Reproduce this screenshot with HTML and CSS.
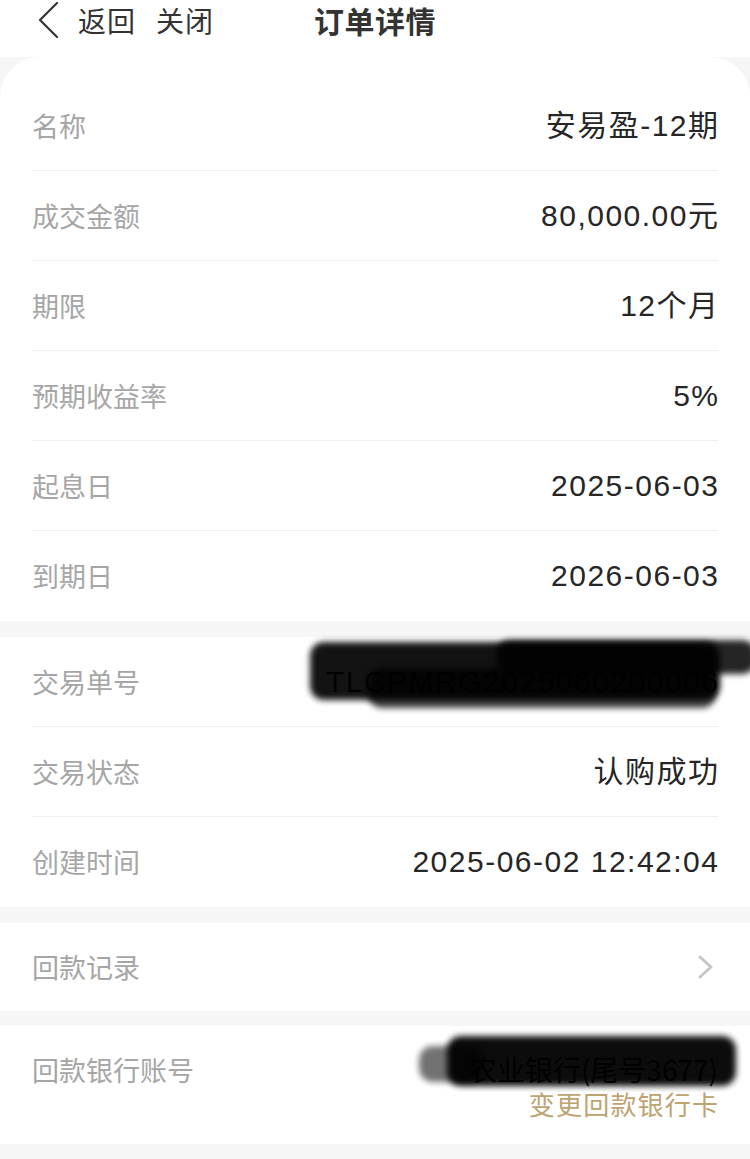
FILE: index.html
```html
<!DOCTYPE html>
<html lang="zh-CN">
<head>
<meta charset="utf-8">
<title>订单详情</title>
<link rel="stylesheet" href="styles.css">
</head>
<body>
<header class="nav">
  <div class="nav-left">
    <svg class="back" width="22" height="36" viewBox="0 0 22 36"><path d="M20 1 L3 18 L20 35" fill="none" stroke="#333" stroke-width="2.2" stroke-linecap="round" stroke-linejoin="round"/></svg>
    <span class="nav-link">返回</span>
    <span class="nav-link">关闭</span>
  </div>
  <h1 class="nav-title">订单详情</h1>
  <div></div>
</header>

<main>
  <section class="card first">
    <div class="row"><span class="label">名称</span><span class="value">安易盈-12期</span></div>
    <div class="row"><span class="label">成交金额</span><span class="value">80,000.00元</span></div>
    <div class="row"><span class="label">期限</span><span class="value">12个月</span></div>
    <div class="row"><span class="label">预期收益率</span><span class="value">5%</span></div>
    <div class="row"><span class="label">起息日</span><span class="value">2025-06-03</span></div>
    <div class="row last"><span class="label">到期日</span><span class="value">2026-06-03</span></div>
  </section>

  <section class="card">
    <div class="row"><span class="label">交易单号</span>
      <span class="value masked">TLCPMRG2025060200006
        <span class="blot b1"></span><span class="blot b2"></span><span class="blot b3"></span>
      </span>
    </div>
    <div class="row"><span class="label">交易状态</span><span class="value">认购成功</span></div>
    <div class="row last"><span class="label">创建时间</span><span class="value">2025-06-02 12:42:04</span></div>
  </section>

  <section class="card">
    <div class="row last short"><span class="label">回款记录</span>
      <svg class="chev" width="16" height="24" viewBox="0 0 16 24"><path d="M2 2 L13 12 L2 22" fill="none" stroke="#c6c6c6" stroke-width="3" stroke-linecap="round" stroke-linejoin="round"/></svg>
    </div>
  </section>

  <section class="card bank">
    <span class="label">回款银行账号</span>
    <div class="bank-right">
      <span class="value masked">农业银行(尾号3677)
        <span class="blot c1"></span><span class="blot c2"></span>
      </span>
      <span class="link">变更回款银行卡</span>
    </div>
  </section>
</main>
</body>
</html>
```
FILE: styles.css
```css
* { box-sizing: border-box; }
html, body { margin: 0; padding: 0; }
body {
  width: 750px;
  min-height: 1159px;
  background: #f6f6f6;
  font-family: "Liberation Sans", "Noto Sans CJK SC", sans-serif;
  overflow: hidden;
}
.nav {
  height: 57px;
  background: #fff;
  display: grid;
  grid-template-columns: 1fr auto 1fr;
  align-items: start;
  padding-top: 1px;
}
.nav-left {
  display: flex;
  align-items: center;
  height: 38px;
  padding-left: 37px;
}
.back { display: block; margin-right: 19px; }
.nav-link {
  font-size: 28px;
  line-height: 36px;
  color: #333;
  margin-right: 20px;
  letter-spacing: 1px;
  font-family: "Noto Sans CJK SC", sans-serif;
}
.nav-title {
  margin: 0;
  font-size: 30px;
  line-height: 38px;
  font-weight: 600;
  color: #333;
  letter-spacing: 0.5px;
  font-family: "Noto Sans CJK SC", sans-serif;
}
.card {
  background: #fff;
  padding: 0 32px;
  margin-top: 16px;
}
.card.first {
  margin-top: 0;
  border-radius: 40px 40px 0 0;
  padding-top: 24px;
}
.row {
  height: 90px;
  display: flex;
  justify-content: space-between;
  align-items: center;
  border-bottom: 1px solid #efefef;
}
.row.last { border-bottom: none; }
.row.short { height: 88px; }
.label {
  font-size: 27px;
  line-height: 36px;
  color: #a6a6a6;
  font-family: "Noto Sans CJK SC", sans-serif;
}
.value {
  font-size: 30px;
  line-height: 36px;
  color: #262626;
  white-space: nowrap;
  letter-spacing: 1.5px;
  margin-right: -1.5px;
}
.chev { display: block; margin-right: 4px; }
.masked { position: relative; color: #111; }
.blot {
  position: absolute;
  background: #000;
  border-radius: 14px;
  filter: blur(3px);
}
.b1 { left: -16px; top: -22px; right: 0; height: 58px; opacity: 0.92; }
.b2 { left: 42px; top: 4px; right: 4px; height: 40px; opacity: 0.75; }
.b3 { left: 170px; top: -24px; right: -36px; height: 34px; opacity: 0.85; }
.card.bank {
  margin-top: 15px;
  display: flex;
  justify-content: space-between;
  align-items: flex-start;
  padding-top: 26px;
  padding-bottom: 24px;
}
.bank-right {
  display: flex;
  flex-direction: column;
  align-items: flex-end;
}
.bank-right .value {
  font-family: "Noto Sans CJK SC", sans-serif;
  font-size: 28px;
  line-height: 34px;
  letter-spacing: 0;
  margin-right: 0;
}
.c1 { left: -22px; top: -16px; right: -18px; height: 50px; opacity: 0.95; }
.c2 { left: -50px; top: -6px; width: 64px; height: 36px; opacity: 0.55; }
.link {
  font-size: 26px;
  line-height: 32px;
  margin-top: 2px;
  letter-spacing: 1.2px;
  margin-right: -1.2px;
  color: #bda371;
  font-family: "Noto Sans CJK SC", sans-serif;
}
```
